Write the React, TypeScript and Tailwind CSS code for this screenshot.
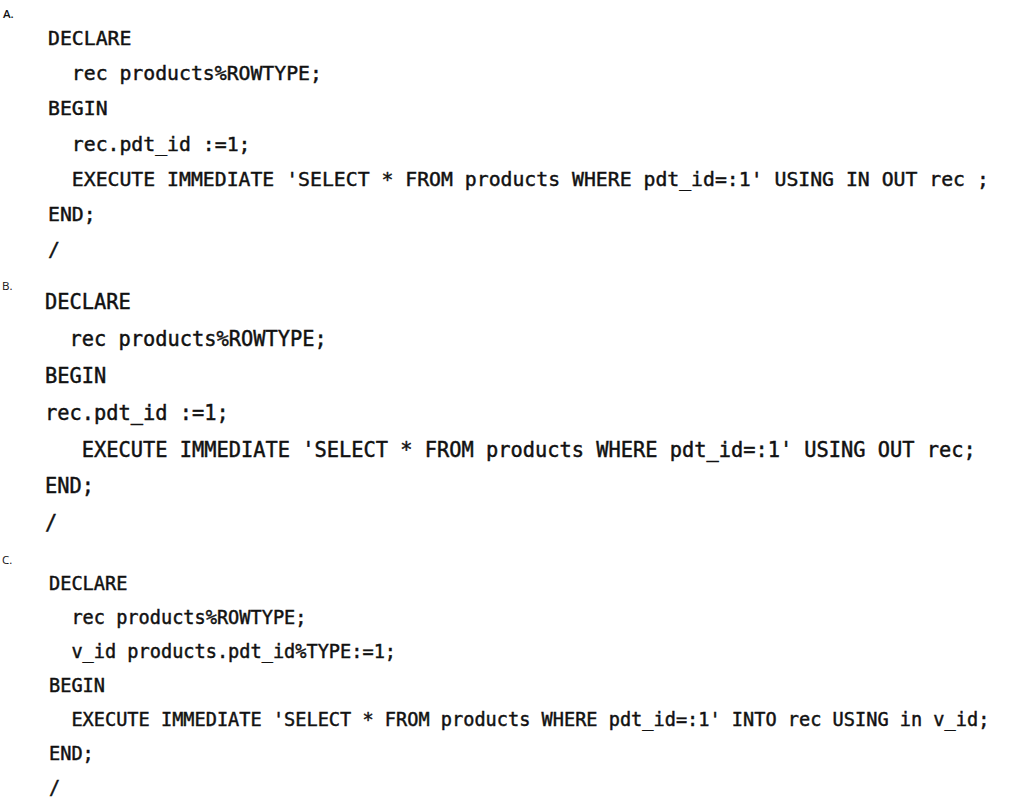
import React from "react";

const mono = "font-['DejaVu_Sans_Mono',monospace] text-[#111] whitespace-pre [-webkit-text-stroke:0.45px_#111]";
const label = "font-['Open_Sans','Liberation_Sans',sans-serif] text-[11.5px] leading-[12px] text-[#111]";

export default function App() {
  return (
    <div className="w-[1013px] h-[798px] bg-white overflow-hidden">
      {/* A */}
      <div className={`${label} mt-[8px] pl-[3px] font-semibold`}>A.</div>
      <div className={`${mono} mt-[1px] pl-[48px] text-[19.8px] leading-[35.2px]`}>
        <div>DECLARE</div>
        <div>{"  rec products%ROWTYPE;"}</div>
        <div>BEGIN</div>
        <div>{"  rec.pdt_id :=1;"}</div>
        <div>{"  EXECUTE IMMEDIATE 'SELECT * FROM products WHERE pdt_id=:1' USING IN OUT rec ;"}</div>
        <div>END;</div>
        <div>/</div>
      </div>
      {/* B */}
      <div className={`${label} mt-[13px] pl-[2px]`}>B.</div>
      <div className={`${mono} mt-[-8px] pl-[45px] text-[20.35px] leading-[36.8px]`}>
        <div>DECLARE</div>
        <div>{"  rec products%ROWTYPE;"}</div>
        <div>BEGIN</div>
        <div>rec.pdt_id :=1;</div>
        <div>{"   EXECUTE IMMEDIATE 'SELECT * FROM products WHERE pdt_id=:1' USING OUT rec;"}</div>
        <div>END;</div>
        <div>/</div>
      </div>
      {/* C */}
      <div className={`${label} mt-[12px] pl-[2px]`}>C.</div>
      <div className={`${mono} mt-[1px] pl-[49px] text-[18.6px] leading-[34px]`}>
        <div>DECLARE</div>
        <div>{"  rec products%ROWTYPE;"}</div>
        <div>{"  v_id products.pdt_id%TYPE:=1;"}</div>
        <div>BEGIN</div>
        <div>{"  EXECUTE IMMEDIATE 'SELECT * FROM products WHERE pdt_id=:1' INTO rec USING in v_id;"}</div>
        <div>END;</div>
        <div>/</div>
      </div>
    </div>
  );
}
